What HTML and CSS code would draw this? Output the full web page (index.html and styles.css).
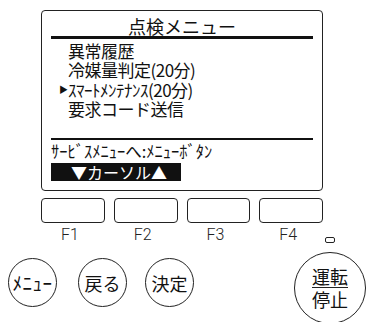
FILE: index.html
```html
<!DOCTYPE html>
<html lang="ja">
<head>
  <meta charset="UTF-8" />
  <title>点検メニュー</title>
  <link rel="stylesheet" href="styles.css">
</head>
<body>
  <div class="panel">
    <div class="screen">
      <div class="title">点検メニュー</div>
      <ul class="menu">
        <li>異常履歴</li>
        <li>冷媒量判定(20分)</li>
        <li class="sel">ｽﾏｰﾄﾒﾝﾃﾅﾝｽ(20分)</li>
        <li>要求コード送信</li>
      </ul>
      <div class="footer">
        <div class="hint">ｻｰﾋﾞｽﾒﾆｭｰへ:ﾒﾆｭｰﾎﾞﾀﾝ</div>
        <div class="cursor">▼カーソル▲</div>
      </div>
    </div>

    <div class="fkeys">
      <div class="fkey"><div class="key"></div><span>F1</span></div>
      <div class="fkey"><div class="key"></div><span>F2</span></div>
      <div class="fkey"><div class="key"></div><span>F3</span></div>
      <div class="fkey"><div class="key"></div><span>F4</span></div>
    </div>
    <div class="led"></div>

    <div class="buttons">
      <div class="btn menu-btn">ﾒﾆｭｰ</div>
      <div class="btn back-btn">戻る</div>
      <div class="btn ok-btn">決定</div>
      <div class="btn power">
        <span class="top">運転</span>
        <span>停止</span>
      </div>
    </div>
  </div>
</body>
</html>
```

FILE: styles.css
```css
* {
  box-sizing: border-box;
  margin: 0;
  padding: 0;
}
body {
  background: #fff;
  color: #111;
  font-family: "Noto Sans CJK JP", "Noto Sans", sans-serif;
  width: 366px;
  height: 322px;
  overflow: hidden;
}
.panel {
  position: relative;
  padding: 10px 0 0 41px;
}
.screen {
  width: 282px;
  height: 181px;
  border: 1.5px solid #222;
  border-radius: 4px;
  padding: 0 9px;
}
.title {
  height: 27.5px;
  line-height: 30px;
  font-size: 18px;
  text-align: center;
  border-bottom: 3px solid #111;
  white-space: nowrap;
}
.menu {
  list-style: none;
  height: 101px;
  padding: 2px 0 0 17px;
  border-bottom: 2.5px solid #111;
}
.menu li {
  font-size: 17px;
  line-height: 19.5px;
  letter-spacing: -0.5px;
  white-space: nowrap;
}
.menu li.sel {
  position: relative;
}
.menu li.sel::before {
  content: "▶";
  position: absolute;
  left: -9px;
  top: 0;
  font-size: 9px;
}
.hint {
  font-size: 16.5px;
  line-height: 20px;
  margin-top: 1.5px;
  white-space: nowrap;
}
.cursor {
  margin-top: 1.5px;
  width: 130px;
  height: 18px;
  line-height: 18px;
  background: #111;
  color: #fff;
  font-size: 16px;
  padding-left: 20px;
  white-space: nowrap;
}
.fkeys {
  display: grid;
  grid-template-columns: repeat(4, 1fr);
  gap: 9px;
  width: 282px;
  margin-top: 7px;
}
.key {
  height: 25px;
  border: 1.3px solid #222;
  border-radius: 4px;
}
.fkey span {
  display: block;
  text-align: center;
  padding-right: 6px;
  font-family: Roboto, "Liberation Sans", sans-serif;
  font-weight: 300;
  font-size: 16px;
  line-height: 20px;
  margin-top: 2px;
  color: #222;
}
.led {
  position: absolute;
  left: 325px;
  top: 237px;
  width: 10px;
  height: 6px;
  border: 1.3px solid #222;
  border-radius: 2px;
}
.buttons {
  display: flex;
  align-items: flex-start;
  margin-left: -33px;
}
.btn {
  width: 49px;
  height: 49px;
  border: 1.4px solid #222;
  border-radius: 50%;
  display: flex;
  align-items: center;
  justify-content: center;
  font-size: 18px;
  margin-top: 13px;
  white-space: nowrap;
}
.menu-btn {
  font-size: 19px;
  letter-spacing: 0.5px;
}
.back-btn {
  margin-left: 21px;
}
.ok-btn {
  margin-left: 18px;
}
.power {
  width: 72px;
  height: 72px;
  margin-top: 7px;
  margin-left: 100px;
  flex-direction: column;
  font-size: 18px;
  line-height: 19px;
}
.power .top {
  border-bottom: 1.5px solid #222;
  padding-bottom: 1px;
  margin-bottom: 2px;
}
```
